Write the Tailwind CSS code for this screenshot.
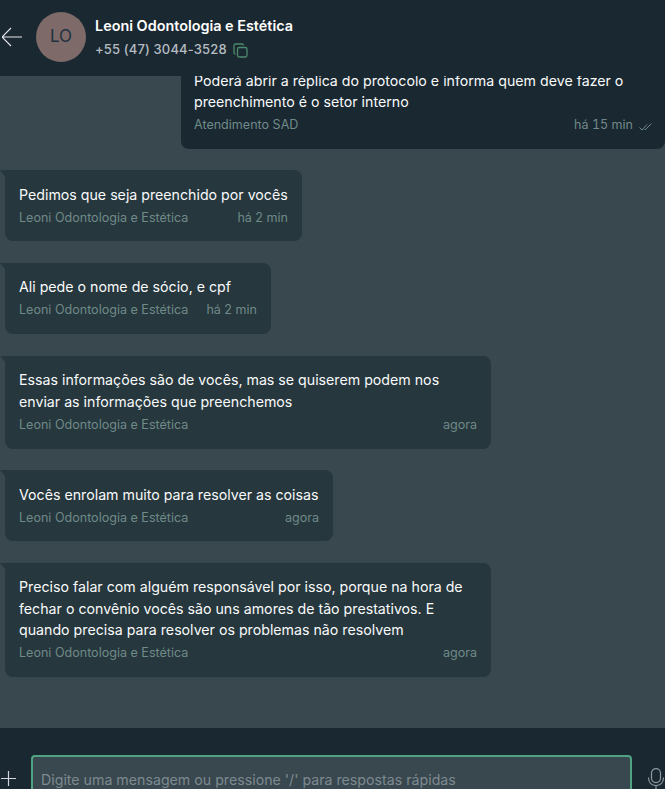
<!DOCTYPE html>
<html lang="en">
<head>
    <meta charset="UTF-8">
    <meta name="viewport" content="width=device-width, initial-scale=1.0">
    <title>Atendimento</title>
    <script src="https://cdn.jsdelivr.net/npm/@tailwindcss/browser@4"></script>
</head>
<body class="h-screen overflow-hidden bg-[#39474e] font-['Inter',sans-serif]">
  <div class="flex h-[789px] flex-col">

    <!-- header -->
    <header class="flex h-[76px] shrink-0 items-center bg-[#1a2831] pb-[2px]">
      <svg class="ml-[2px] h-[20px] w-[20px]" viewBox="0 0 20 20" fill="none" stroke="#e5e7eb" stroke-width="1.1">
        <path d="M0 10H20M9 1L0 10L9 19"/>
      </svg>
      <div class="ml-[14px] flex h-[50px] w-[50px] items-center justify-center rounded-full bg-[#7d6a69] text-[17px] text-[#1f3140]">LO</div>
      <div class="ml-[9px] flex flex-col gap-[3px]">
        <span class="text-[14.4px] leading-[21px] font-semibold text-white">Leoni Odontologia e Estética</span>
        <div class="flex items-center gap-[6px]">
          <span class="text-[13px] leading-[20px] font-medium tracking-[0.15px] text-[#b5bcc1]">+55 (47) 3044-3528</span>
          <svg class="mt-[2px] h-[15px] w-[15px]" viewBox="0 0 15 15" fill="none" stroke="#4d8a6c" stroke-width="1.3">
            <rect x="4.5" y="4.5" width="9.5" height="9.5" rx="1.8"/>
            <path d="M2.5 11C1.5 11 1 10.5 1 9.5V2.5C1 1.5 1.5 1 2.5 1H9C10 1 10.5 1.5 10.5 2.5"/>
          </svg>
        </div>
      </div>
    </header>

    <!-- messages -->
    <main class="flex min-h-0 flex-1 flex-col justify-end gap-[21.5px] overflow-hidden pb-[51px]">
      <div class="ml-[181px] shrink-0 rounded-br-[8px] rounded-bl-[8px] bg-[#1a2831] pt-[14px] pr-[13px] pb-[11px] pl-[13px]">
        <p class="text-[14.2px] leading-[21.36px] text-[#f9fafb]">Poderá abrir a réplica do protocolo e informa quem deve fazer o preenchimento é o setor interno</p>
        <div class="flex h-[25px] items-center justify-between text-[12.55px] text-[#6f8a88]">
          <span>Atendimento SAD</span>
          <span class="flex items-center gap-[6px] tabular-nums">há 15 min
            <svg class="mt-[3px] h-[8px] w-[13px]" viewBox="0 0 13 8" fill="none" stroke="#6f8a88" stroke-width="1">
              <path d="M0.5 4.5L3 7L8 1.5M5.5 6.5L6 7L12.5 0.5"/>
            </svg>
          </span>
        </div>
      </div>

      <div class="relative ml-[5px] w-[297px] shrink-0 rounded-[8px] rounded-tl-none bg-[#26373d] pt-[13.5px] pr-[14px] pb-[10.5px] pl-[14px]">
        <span class="absolute top-0 -left-[5px] h-[6px] w-[5px] bg-[#26373d] [clip-path:polygon(0_0,100%_0,100%_100%)]"></span>
        <p class="text-[14.2px] leading-[21.36px] text-[#f9fafb]">Pedimos que seja preenchido por vocês</p>
        <div class="flex h-[26px] items-center justify-between text-[12.55px] text-[#6f8a88]">
          <span>Leoni Odontologia e Estética</span>
          <span>há 2 min</span>
        </div>
      </div>

      <div class="relative ml-[5px] w-[266px] shrink-0 rounded-[8px] rounded-tl-none bg-[#26373d] pt-[13.5px] pr-[14px] pb-[10.5px] pl-[14px]">
        <span class="absolute top-0 -left-[5px] h-[6px] w-[5px] bg-[#26373d] [clip-path:polygon(0_0,100%_0,100%_100%)]"></span>
        <p class="text-[14.2px] leading-[21.36px] text-[#f9fafb]">Ali pede o nome de sócio, e cpf</p>
        <div class="flex h-[26px] items-center justify-between text-[12.55px] text-[#6f8a88]">
          <span>Leoni Odontologia e Estética</span>
          <span>há 2 min</span>
        </div>
      </div>

      <div class="relative ml-[5px] w-[486px] shrink-0 rounded-[8px] rounded-tl-none bg-[#26373d] pt-[13.5px] pr-[14px] pb-[10.5px] pl-[14px]">
        <span class="absolute top-0 -left-[5px] h-[6px] w-[5px] bg-[#26373d] [clip-path:polygon(0_0,100%_0,100%_100%)]"></span>
        <p class="text-[14.2px] leading-[21.36px] text-[#f9fafb]">Essas informações são de vocês, mas se quiserem podem nos enviar as informações que preenchemos</p>
        <div class="flex h-[26px] items-center justify-between text-[12.55px] text-[#6f8a88]">
          <span>Leoni Odontologia e Estética</span>
          <span>agora</span>
        </div>
      </div>

      <div class="relative ml-[5px] w-[328px] shrink-0 rounded-[8px] rounded-tl-none bg-[#26373d] pt-[13.5px] pr-[14px] pb-[10.5px] pl-[14px]">
        <span class="absolute top-0 -left-[5px] h-[6px] w-[5px] bg-[#26373d] [clip-path:polygon(0_0,100%_0,100%_100%)]"></span>
        <p class="text-[14.2px] leading-[21.36px] text-[#f9fafb]">Vocês enrolam muito para resolver as coisas</p>
        <div class="flex h-[26px] items-center justify-between text-[12.55px] text-[#6f8a88]">
          <span>Leoni Odontologia e Estética</span>
          <span>agora</span>
        </div>
      </div>

      <div class="relative ml-[5px] w-[486px] shrink-0 rounded-[8px] rounded-tl-none bg-[#26373d] pt-[13.5px] pr-[14px] pb-[10.5px] pl-[14px]">
        <span class="absolute top-0 -left-[5px] h-[6px] w-[5px] bg-[#26373d] [clip-path:polygon(0_0,100%_0,100%_100%)]"></span>
        <p class="text-[14.2px] leading-[21.36px] text-[#f9fafb]">Preciso falar com alguém responsável por isso, porque na hora de fechar o convênio vocês são uns amores de tão prestativos. E quando precisa para resolver os problemas não resolvem</p>
        <div class="flex h-[26px] items-center justify-between text-[12.55px] text-[#6f8a88]">
          <span>Leoni Odontologia e Estética</span>
          <span>agora</span>
        </div>
      </div>
    </main>

    <!-- message input -->
    <footer class="flex h-[61px] shrink-0 items-start bg-[#1a2831] pt-[27px]">
      <svg class="mt-[16px] ml-[1px] h-[15px] w-[15px] shrink-0" viewBox="0 0 15 15" fill="none" stroke="#d1d5db" stroke-width="1.2">
        <path d="M7.5 0V15M0 7.5H15"/>
      </svg>
      <div class="ml-[15px] h-[48px] w-[601px] shrink-0 rounded-[4px] border-2 border-[#4fa382] bg-[#39474e] px-[8px] pt-[12px] text-[14.2px] leading-[21px] text-[#7d8a90]">Digite uma mensagem ou pressione '/' para respostas rápidas</div>
      <svg class="mt-[13px] ml-[15px] h-[22px] w-[18px] shrink-0" viewBox="0 0 18 22" fill="none" stroke="#8f9ba0" stroke-width="1.2">
        <rect x="4.5" y="0.6" width="9" height="14" rx="4.5"/>
        <path d="M1.5 9.5C1.5 15 5 17.5 9 17.5C13 17.5 16.5 15 16.5 9.5M9 17.5V22"/>
      </svg>
    </footer>
  </div>
</body>
</html>
